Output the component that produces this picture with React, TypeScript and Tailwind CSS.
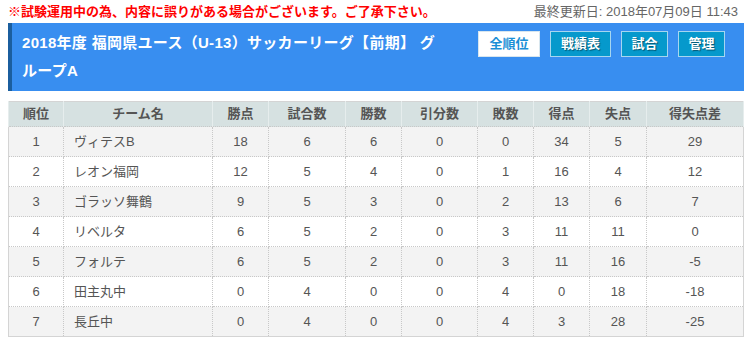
const columns = [
  { label: '順位', w: 'w-[55px]' },
  { label: 'チーム名', w: 'w-[149px]' },
  { label: '勝点', w: 'w-[56px]' },
  { label: '試合数', w: 'w-[77px]' },
  { label: '勝数', w: 'w-[56px]' },
  { label: '引分数', w: 'w-[76px]' },
  { label: '敗数', w: 'w-[56px]' },
  { label: '得点', w: 'w-[56px]' },
  { label: '失点', w: 'w-[57px]' },
  { label: '得失点差', w: 'w-[97px]' },
]

const rows: (string | number)[][] = [
  [1, 'ヴィテスB', 18, 6, 6, 0, 0, 34, 5, 29],
  [2, 'レオン福岡', 12, 5, 4, 0, 1, 16, 4, 12],
  [3, 'ゴラッソ舞鶴', 9, 5, 3, 0, 2, 13, 6, 7],
  [4, 'リベルタ', 6, 5, 2, 0, 3, 11, 11, 0],
  [5, 'フォルテ', 6, 5, 2, 0, 3, 11, 16, -5],
  [6, '田主丸中', 0, 4, 0, 0, 4, 0, 18, -18],
  [7, '長丘中', 0, 4, 0, 0, 4, 3, 28, -25],
]

const font = "font-['Liberation_Sans','Noto_Sans_CJK_JP',sans-serif]"

export default function App() {
  return (
    <div className={`w-[750px] h-[345px] bg-white overflow-hidden ${font}`}>
      {/* Notice + last update */}
      <div className="flex items-center justify-between h-[23px] pl-[8px] pr-[12px] text-[13px]">
        <p className="font-bold text-[#ff0000]">
          ※試験運用中の為、内容に誤りがある場合がございます。ご了承下さい。
        </p>
        <p className="text-[#666]">最終更新日: 2018年07月09日 11:43</p>
      </div>

      {/* Title bar */}
      <div className="ml-[8px] w-[736px] flex items-start justify-between bg-[#388ef0] border-l-4 border-[#1b5e9e] pl-[10px] pr-[19px] py-[6px]">
        <h1 className="w-[418px] text-white font-bold text-[15px] leading-[28px] tracking-[0.3px]">
          2018年度 福岡県ユース（U-13）サッカーリーグ【前期】 グループA
        </h1>
        <div className="flex gap-[10px] pt-[2px]">
          <button className="w-[62px] h-[26px] bg-white border border-[#d8e6ee] text-[#1a8fd6] font-bold text-[13px]">
            全順位
          </button>
          {['戦績表', '試合', '管理'].map((b, i) => (
            <button
              key={b}
              className={`${i === 0 ? 'w-[61px]' : 'w-[47px]'} h-[26px] bg-[#0699cc] border border-[#a6d6f0] text-white font-bold text-[13px] [text-shadow:1px_1px_1px_rgba(0,0,0,0.45)]`}
            >
              {b}
            </button>
          ))}
        </div>
      </div>

      {/* Standings */}
      <table className="ml-[8px] mt-[10px] w-[735px] border-collapse table-fixed text-[13px] text-[#555] border border-[#d4d4d4]">
        <thead>
          <tr className="h-[25px] bg-[#d6e1e1]">
            {columns.map((c) => (
              <th
                key={c.label}
                className={`${c.w} font-bold text-[#555] border-x border-[#e6eded] text-center`}
              >
                {c.label}
              </th>
            ))}
          </tr>
        </thead>
        <tbody>
          {rows.map((r, ri) => (
            <tr key={ri} className={`h-[30px] ${ri % 2 === 0 ? 'bg-[#f3f3f3]' : 'bg-white'}`}>
              {r.map((v, ci) => (
                <td
                  key={ci}
                  className={`border border-dotted border-[#c8c8c8] ${ci === 1 ? 'text-left pl-[10px]' : 'text-center'}`}
                >
                  {v}
                </td>
              ))}
            </tr>
          ))}
        </tbody>
      </table>
    </div>
  )
}
